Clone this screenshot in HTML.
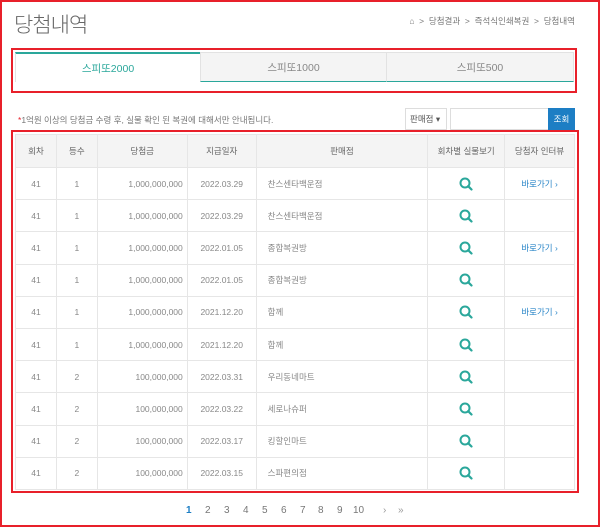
<!DOCTYPE html>
<html><head><meta charset="utf-8"><style>
*{margin:0;padding:0;box-sizing:border-box}
body{width:600px;height:527px;background:#fff;font-family:"Liberation Sans","Noto Sans CJK KR",sans-serif;position:relative;overflow:hidden;color:#666}
.abs{position:absolute}
.outer{left:0;top:0;width:600px;height:527px;border:2px solid #e8202a}
h1{position:absolute;left:14px;top:9px;font-size:21px;font-weight:300;color:#666;letter-spacing:-1px}
.bc{position:absolute;right:25px;top:15px;font-size:8.5px;color:#777}
.tabbox{left:11px;top:48px;width:566px;height:45px;border:2px solid #e8202a}
.tab{position:absolute;top:52px;height:30px;font-size:10.5px;text-align:center;line-height:30px;color:#888;background:#f4f4f4;border:1px solid #e2e2e2;border-bottom:1px solid #2aa79b}
.note{left:18px;top:114px;font-size:8.5px;color:#777}
table{position:absolute;left:15px;top:134px;width:560px;border-collapse:collapse;font-size:8.5px}
td,th{border:1px solid #e6e6e6;height:32.2px;text-align:center;color:#888;font-weight:normal}
th{background:#f4f4f4;color:#666;height:33px}
td.r{text-align:right;padding-right:4px}
td.l{text-align:left;padding-left:11px}
.lk{color:#2a86c8}
.tbox{left:11px;top:130px;width:568px;height:363px;border:2px solid #e8202a}
.pg{position:absolute;top:505px;font-size:10px;color:#777}
svg{vertical-align:middle}
</style></head><body>
<div class="abs outer"></div>
<h1>당첨내역</h1>
<div class="bc">⌂ &nbsp;&gt;&nbsp; 당첨결과 &nbsp;&gt;&nbsp; 즉석식인쇄복권 &nbsp;&gt;&nbsp; 당첨내역</div>
<div class="abs tabbox"></div>
<div class="tab" style="left:15px;width:186px;background:#fff;border-top:2px solid #2aa79b;border-bottom:none;color:#2aa79b">스피또2000</div>
<div class="tab" style="left:200px;width:187px">스피또1000</div>
<div class="tab" style="left:386px;width:188px">스피또500</div>
<div class="abs note"><span style="color:#e8202a">*</span>1억원 이상의 당첨금 수령 후, 실물 확인 된 복권에 대해서만 안내됩니다.</div>
<div class="abs" style="left:405px;top:108px;width:42px;height:22px;border:1px solid #ddd;font-size:8.5px;line-height:20px;padding-left:4px;color:#555">판매점 ▾</div>
<div class="abs" style="left:450px;top:108px;width:99px;height:22px;border:1px solid #ddd"></div>
<div class="abs" style="left:548px;top:108px;width:27px;height:22px;background:#1d7ec4;color:#fff;font-size:8.5px;line-height:22px;text-align:center">조회</div>
<div class="abs tbox"></div>
<table>
<colgroup><col style="width:41px"><col style="width:41px"><col style="width:90px"><col style="width:69px"><col style="width:172px"><col style="width:77px"><col style="width:70px"></colgroup>
<tr><th>회차</th><th>등수</th><th>당첨금</th><th>지급일자</th><th>판매점</th><th>회차별 실물보기</th><th>당첨자 인터뷰</th></tr>
<tr><td>41</td><td>1</td><td class="r">1,000,000,000</td><td>2022.03.29</td><td class="l">찬스센타백운점</td><td><svg width="14" height="14" viewBox="0 0 14 14"><circle cx="6" cy="6" r="4.5" fill="none" stroke="#2aa79b" stroke-width="2"/><path d="M9.2 9.2L12.5 12.5" stroke="#2aa79b" stroke-width="2.2" stroke-linecap="round"/></svg></td><td class="lk">바로가기 ›</td></tr>
<tr><td>41</td><td>1</td><td class="r">1,000,000,000</td><td>2022.03.29</td><td class="l">찬스센타백운점</td><td><svg width="14" height="14" viewBox="0 0 14 14"><circle cx="6" cy="6" r="4.5" fill="none" stroke="#2aa79b" stroke-width="2"/><path d="M9.2 9.2L12.5 12.5" stroke="#2aa79b" stroke-width="2.2" stroke-linecap="round"/></svg></td><td></td></tr>
<tr><td>41</td><td>1</td><td class="r">1,000,000,000</td><td>2022.01.05</td><td class="l">종합복권방</td><td><svg width="14" height="14" viewBox="0 0 14 14"><circle cx="6" cy="6" r="4.5" fill="none" stroke="#2aa79b" stroke-width="2"/><path d="M9.2 9.2L12.5 12.5" stroke="#2aa79b" stroke-width="2.2" stroke-linecap="round"/></svg></td><td class="lk">바로가기 ›</td></tr>
<tr><td>41</td><td>1</td><td class="r">1,000,000,000</td><td>2022.01.05</td><td class="l">종합복권방</td><td><svg width="14" height="14" viewBox="0 0 14 14"><circle cx="6" cy="6" r="4.5" fill="none" stroke="#2aa79b" stroke-width="2"/><path d="M9.2 9.2L12.5 12.5" stroke="#2aa79b" stroke-width="2.2" stroke-linecap="round"/></svg></td><td></td></tr>
<tr><td>41</td><td>1</td><td class="r">1,000,000,000</td><td>2021.12.20</td><td class="l">함께</td><td><svg width="14" height="14" viewBox="0 0 14 14"><circle cx="6" cy="6" r="4.5" fill="none" stroke="#2aa79b" stroke-width="2"/><path d="M9.2 9.2L12.5 12.5" stroke="#2aa79b" stroke-width="2.2" stroke-linecap="round"/></svg></td><td class="lk">바로가기 ›</td></tr>
<tr><td>41</td><td>1</td><td class="r">1,000,000,000</td><td>2021.12.20</td><td class="l">함께</td><td><svg width="14" height="14" viewBox="0 0 14 14"><circle cx="6" cy="6" r="4.5" fill="none" stroke="#2aa79b" stroke-width="2"/><path d="M9.2 9.2L12.5 12.5" stroke="#2aa79b" stroke-width="2.2" stroke-linecap="round"/></svg></td><td></td></tr>
<tr><td>41</td><td>2</td><td class="r">100,000,000</td><td>2022.03.31</td><td class="l">우리동네마트</td><td><svg width="14" height="14" viewBox="0 0 14 14"><circle cx="6" cy="6" r="4.5" fill="none" stroke="#2aa79b" stroke-width="2"/><path d="M9.2 9.2L12.5 12.5" stroke="#2aa79b" stroke-width="2.2" stroke-linecap="round"/></svg></td><td></td></tr>
<tr><td>41</td><td>2</td><td class="r">100,000,000</td><td>2022.03.22</td><td class="l">세로나슈퍼</td><td><svg width="14" height="14" viewBox="0 0 14 14"><circle cx="6" cy="6" r="4.5" fill="none" stroke="#2aa79b" stroke-width="2"/><path d="M9.2 9.2L12.5 12.5" stroke="#2aa79b" stroke-width="2.2" stroke-linecap="round"/></svg></td><td></td></tr>
<tr><td>41</td><td>2</td><td class="r">100,000,000</td><td>2022.03.17</td><td class="l">킹할인마트</td><td><svg width="14" height="14" viewBox="0 0 14 14"><circle cx="6" cy="6" r="4.5" fill="none" stroke="#2aa79b" stroke-width="2"/><path d="M9.2 9.2L12.5 12.5" stroke="#2aa79b" stroke-width="2.2" stroke-linecap="round"/></svg></td><td></td></tr>
<tr><td>41</td><td>2</td><td class="r">100,000,000</td><td>2022.03.15</td><td class="l">스파편의점</td><td><svg width="14" height="14" viewBox="0 0 14 14"><circle cx="6" cy="6" r="4.5" fill="none" stroke="#2aa79b" stroke-width="2"/><path d="M9.2 9.2L12.5 12.5" stroke="#2aa79b" stroke-width="2.2" stroke-linecap="round"/></svg></td><td></td></tr>
</table>
<div class="pg" style="left:186px;color:#1d7ec4;font-weight:bold">1</div>
<div class="pg" style="left:205px">2</div>
<div class="pg" style="left:224px">3</div>
<div class="pg" style="left:243px">4</div>
<div class="pg" style="left:262px">5</div>
<div class="pg" style="left:281px">6</div>
<div class="pg" style="left:300px">7</div>
<div class="pg" style="left:318px">8</div>
<div class="pg" style="left:337px">9</div>
<div class="pg" style="left:353px">10</div>
<div class="pg" style="left:383px;color:#999">›</div>
<div class="pg" style="left:398px;color:#999">»</div>
</body></html>
